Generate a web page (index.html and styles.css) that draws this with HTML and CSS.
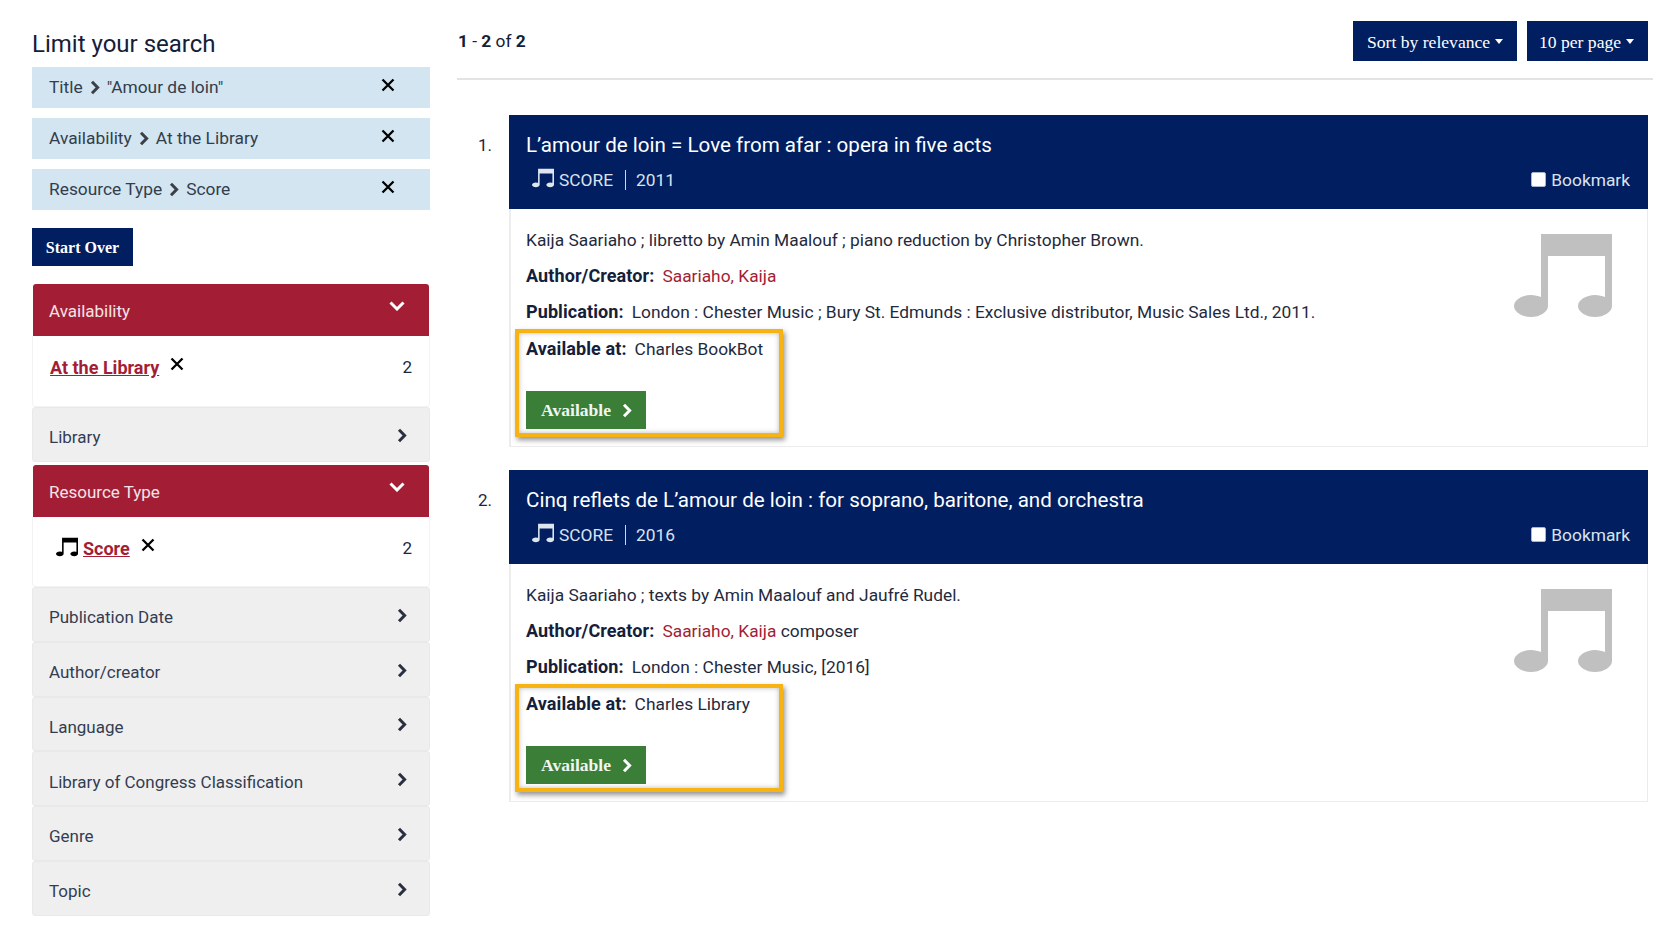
FILE: index.html
```html
<!DOCTYPE html>
<html lang="en">
<head>
<meta charset="utf-8">
<title>Search results</title>
<link rel="stylesheet" href="styles.css">
</head>
<body>
<svg class="defs" width="0" height="0" aria-hidden="true">
  <symbol id="note" viewBox="0 0 98 83"><path d="M27 0H98V72C98 78 90 83 81 83C72 83 64 78 64 72C64 66 72 61 81 61C85 61 88 62 91 63V22H34V72C34 78 26 83 17 83C8 83 0 78 0 72C0 66 8 61 17 61C21 61 24 62 27 63Z"/></symbol>
  <symbol id="x" viewBox="0 0 14 14"><path d="M1.5 1.5L12.5 12.5M12.5 1.5L1.5 12.5" fill="none" stroke="currentColor" stroke-width="2.3"/></symbol>
  <symbol id="right" viewBox="0 0 10 15"><path d="M2 1.8L7.6 7.5L2 13.2" fill="none" stroke="currentColor" stroke-width="3"/></symbol>
  <symbol id="down" viewBox="0 0 16 10"><path d="M1.5 1.5L8 8L14.5 1.5" fill="none" stroke="currentColor" stroke-width="3"/></symbol>
</svg>
<div class="page">
  <aside class="sidebar">
    <h2 class="side-title">Limit your search</h2>
    <div class="chips">
      <div class="chip"><span class="chip-text">Title <svg class="crumb"><use href="#right"/></svg> "Amour de loin"</span><svg class="chip-x"><use href="#x"/></svg></div>
      <div class="chip"><span class="chip-text">Availability <svg class="crumb"><use href="#right"/></svg> At the Library</span><svg class="chip-x"><use href="#x"/></svg></div>
      <div class="chip"><span class="chip-text">Resource Type <svg class="crumb"><use href="#right"/></svg> Score</span><svg class="chip-x"><use href="#x"/></svg></div>
    </div>
    <a class="btn start-over">Start Over</a>
    <div class="facets">
      <div class="facet-open">
        <div class="facet-head red"><span>Availability</span><svg class="chev-down"><use href="#down"/></svg></div>
        <div class="facet-body">
          <span class="facet-value"><a class="facet-link">At the Library</a><svg class="facet-x"><use href="#x"/></svg></span>
          <span class="count">2</span>
        </div>
      </div>
      <div class="facet-head grey short"><span>Library</span><svg class="chev-right"><use href="#right"/></svg></div>
      <div class="facet-open">
        <div class="facet-head red"><span>Resource Type</span><svg class="chev-down"><use href="#down"/></svg></div>
        <div class="facet-body">
          <span class="facet-value"><svg class="note-sm side-note"><use href="#note"/></svg><a class="facet-link">Score</a><svg class="facet-x"><use href="#x"/></svg></span>
          <span class="count">2</span>
        </div>
      </div>
      <div class="facet-head grey"><span>Publication Date</span><svg class="chev-right"><use href="#right"/></svg></div>
      <div class="facet-head grey"><span>Author/creator</span><svg class="chev-right"><use href="#right"/></svg></div>
      <div class="facet-head grey"><span>Language</span><svg class="chev-right"><use href="#right"/></svg></div>
      <div class="facet-head grey"><span>Library of Congress Classification</span><svg class="chev-right"><use href="#right"/></svg></div>
      <div class="facet-head grey"><span>Genre</span><svg class="chev-right"><use href="#right"/></svg></div>
      <div class="facet-head grey"><span>Topic</span><svg class="chev-right"><use href="#right"/></svg></div>
    </div>
  </aside>
  <main class="results">
    <div class="toolbar">
      <div class="range"><b>1</b> - <b>2</b> of <b>2</b></div>
      <div class="tools">
        <a class="btn drop sort">Sort by relevance</a>
        <a class="btn drop perpage">10 per page</a>
      </div>
    </div>
    <article class="result">
      <div class="num">1.</div>
      <div class="card">
        <header class="card-head">
          <h3 class="card-title">L’amour de loin = Love from afar : opera in five acts</h3>
          <div class="card-meta">
            <svg class="note-sm"><use href="#note"/></svg><span class="type">SCORE</span><span class="year">2011</span>
            <label class="bookmark"><span class="box"></span>Bookmark</label>
          </div>
        </header>
        <div class="card-body">
          <svg class="note-lg"><use href="#note"/></svg>
          <p class="line">Kaija Saariaho ; libretto by Amin Maalouf ; piano reduction by Christopher Brown.</p>
          <p class="line"><b>Author/Creator:</b><a class="author">Saariaho, Kaija</a></p>
          <p class="line"><b>Publication:</b><span class="val">London : Chester Music ; Bury St. Edmunds : Exclusive distributor, Music Sales Ltd., 2011.</span></p>
          <div class="avail">
            <p class="line"><b>Available at:</b><span class="val">Charles BookBot</span></p>
            <a class="btn green">Available <svg class="btn-chev"><use href="#right"/></svg></a>
          </div>
        </div>
      </div>
    </article>
    <article class="result">
      <div class="num">2.</div>
      <div class="card">
        <header class="card-head">
          <h3 class="card-title">Cinq reflets de L’amour de loin : for soprano, baritone, and orchestra</h3>
          <div class="card-meta">
            <svg class="note-sm"><use href="#note"/></svg><span class="type">SCORE</span><span class="year">2016</span>
            <label class="bookmark"><span class="box"></span>Bookmark</label>
          </div>
        </header>
        <div class="card-body">
          <svg class="note-lg"><use href="#note"/></svg>
          <p class="line">Kaija Saariaho ; texts by Amin Maalouf and Jaufré Rudel.</p>
          <p class="line"><b>Author/Creator:</b><a class="author">Saariaho, Kaija</a> composer</p>
          <p class="line"><b>Publication:</b><span class="val">London : Chester Music, [2016]</span></p>
          <div class="avail">
            <p class="line"><b>Available at:</b><span class="val">Charles Library</span></p>
            <a class="btn green">Available <svg class="btn-chev"><use href="#right"/></svg></a>
          </div>
        </div>
      </div>
    </article>
  </main>
</div>
</body>
</html>
```

FILE: styles.css
```css
* { box-sizing: border-box; }
html, body { margin: 0; padding: 0; }
body {
  background: #fff;
  color: #1b2740;
  font-family: Roboto, "Liberation Sans", sans-serif;
  font-size: 17px;
  line-height: 1.3;
  height: 943px;
  overflow: hidden;
}
.defs { position: absolute; }
.page { display: flex; align-items: flex-start; padding: 0 27px 0 32px; }

/* Sidebar */
.sidebar { width: 398px; flex: none; padding-top: 28px; }
.side-title { margin: 0 0 6px; font-size: 24px; font-weight: 400; line-height: 33px; color: #14203a; }
.chips { display: flex; flex-direction: column; gap: 10px; }
.chip {
  height: 41px; background: #d2e5f0; display: flex; align-items: center;
  justify-content: space-between; padding: 0 35px 0 17px; color: #333d4d; font-size: 17.35px;
}
.chip-text { display: flex; align-items: center; gap: 7px; }
.crumb { width: 10px; height: 15px; color: #3a3f4a; }
.chip-x { width: 14px; height: 14px; color: #000; margin-top: -5px; }
.btn {
  display: inline-flex; align-items: center; background: #001e60; color: #fff;
  font-family: "Liberation Serif", serif; font-weight: 700; font-size: 16px;
}
.start-over { margin-top: 18px; width: 101px; height: 38px; justify-content: center; padding-top: 3px; }
.facets { margin-top: 18px; display: flex; flex-direction: column; }
.facet-head {
  display: flex; align-items: center; justify-content: space-between;
  height: 54.75px; padding: 6px 22px 0 16px; border-radius: 3px;
}
.facet-head.red {
  height: 52px; margin: 0 1px; padding: 3px 24px 0 16px; background: #a31e35; color: #f4e4e6;
  border-radius: 3px 3px 0 0;
}
.facet-head.grey { background: #efefef; border: 1px solid #e9e9e9; color: #333d52; }
.facet-head.short { height: 55px; margin-bottom: 3px; }
.chev-down { width: 16px; height: 10px; color: #fff; margin-top: -11px; }
.chev-right { width: 10px; height: 15px; color: #2b3040; margin-top: -4px; }
.facet-body {
  height: 70.5px; display: flex; justify-content: space-between; align-items: flex-start;
  padding: 20px 17px 0 17px; border: 1px solid #f3f3f3; border-top: 0; border-radius: 0 0 4px 4px;
}
.facet-value { display: flex; align-items: flex-start; }
.facet-link { color: #a31e35; font-weight: 700; font-size: 18px; line-height: 22px; text-decoration: underline; margin-top: 1px; }
.facet-x { width: 14px; height: 14px; color: #000; margin: 1px 0 0 11px; }
.count { color: #1b2740; }
.note-sm { width: 22px; height: 20px; flex: none; fill: currentColor; }
.side-note { color: #000; margin: 0 5px 0 6px; }

/* Results */
.results { flex: 1; margin-left: 27px; }
.toolbar {
  display: flex; justify-content: space-between; height: 80px; padding: 21px 0 0 1px;
  border-bottom: 2px solid #e3e3e3;
}
.range { font-size: 17.35px; padding-top: 9px; color: #14203a; }
.tools { display: flex; gap: 10px; margin-right: 5px; }
.drop { height: 40px; padding: 2px 14px 0; gap: 5px; font-weight: 400; font-size: 17.6px; }
.drop::after {
  content: ""; border-top: 5px solid #fff; border-left: 4px solid transparent; border-right: 4px solid transparent;
  margin-top: -2px;
}
.sort { width: 164px; white-space: nowrap; }
.perpage { width: 121px; padding: 2px 12px 0; white-space: nowrap; }
.result { display: flex; margin-right: 5px; }
.num { width: 52px; flex: none; padding: 19px 0 0 21px; }
.result:nth-of-type(1) { margin-top: 35px; }
.result:nth-of-type(2) { margin-top: 23px; }
.card { flex: 1; }
.card-head { background: #001e60; height: 94px; padding: 16px 18px 0 17px; color: #fff; }
.card-title { margin: 0; font-size: 20.6px; font-weight: 400; line-height: 28px; }
.card-meta { display: flex; align-items: center; height: 28px; margin-top: 7px; color: #dbe2ee; font-size: 17.35px; }
.card-meta .note-sm { margin: -5px 5px 0 6px; color: #dfe5ef; }
.type { padding-right: 12px; border-right: 1px solid #cfd6e4; line-height: 20px; }
.year { padding-left: 10px; }
.bookmark { margin-left: auto; display: flex; align-items: center; gap: 5px; }
.box { width: 15px; height: 15px; background: #fff; border: 1px solid #aab4cc; border-radius: 2px; }
.card-body {
  position: relative; padding: 20px 15px 0; height: 238px;
  border: 1px solid #ececec; border-top: 0; border-left-width: 2px; font-size: 17.35px;
}
.line { margin: 0 0 13px; line-height: 23px; white-space: nowrap; color: #1f2a3d; }
.line b { color: #14203a; font-weight: 700; font-size: 18px; line-height: 1; letter-spacing: .1px; }
.val { margin-left: 8px; }
.author { margin-left: 8px; color: #a31e35; }
.note-lg { position: absolute; right: 35px; top: 25px; width: 98px; height: 83px; fill: #c0c0c0; }
.avail {
  margin: -8px 0 0 -11px; width: 268px; height: 108px; padding: 5px 0 0 7px;
  border: 4px solid #f7b214; box-shadow: 2px 3px 5px rgba(60, 60, 60, .55), inset 0 0 5px rgba(60, 60, 60, .35);
}
.avail .line { margin-bottom: 30px; }
.green { background: #3a7e37; width: 120px; height: 38px; padding-left: 15px; gap: 11px; color: #f1f6f0; font-size: 17.6px; }
.btn-chev { width: 10px; height: 15px; color: #fff; }
```
